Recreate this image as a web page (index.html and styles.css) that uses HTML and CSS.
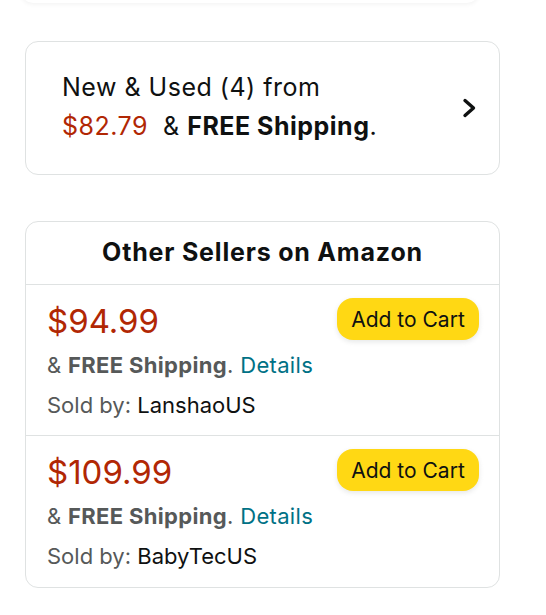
FILE: index.html
```html
<!DOCTYPE html>
<html>
<head>
<meta charset="utf-8">
<link rel="stylesheet" href="styles.css">
</head>
<body>
<div class="page">
  <div class="prev-card"></div>

  <a class="card offers">
    <div class="offers-text">
      <div>New &amp; Used (4) from</div>
      <div><span class="price-sm">$82.79</span>&nbsp; &amp; <b>FREE Shipping</b>.</div>
    </div>
    <svg class="chevron" width="16" height="22" viewBox="0 0 16 22"><path d="M4 3.5 L12.5 11 L4 18.5" fill="none" stroke="#0f1111" stroke-width="3.4" stroke-linecap="round" stroke-linejoin="round"/></svg>
  </a>

  <div class="card sellers">
    <div class="sellers-head">Other Sellers on Amazon</div>
    <div class="seller">
      <div class="seller-info">
        <div class="price">$94.99</div>
        <div class="ship">&amp; <b>FREE Shipping</b>. <span class="link">Details</span></div>
        <div class="sold">Sold by: <span class="name">LanshaoUS</span></div>
      </div>
      <button class="cart">Add to Cart</button>
    </div>
    <div class="seller">
      <div class="seller-info">
        <div class="price">$109.99</div>
        <div class="ship">&amp; <b>FREE Shipping</b>. <span class="link">Details</span></div>
        <div class="sold">Sold by: <span class="name">BabyTecUS</span></div>
      </div>
      <button class="cart">Add to Cart</button>
    </div>
  </div>
</div>
</body>
</html>
```
FILE: styles.css
```css
html, body {
  margin: 0;
  padding: 0;
  background: #fff;
}
body {
  font-family: "Inter", "Liberation Sans", sans-serif;
  color: #0f1111;
}
.page {
  width: 475px;
  padding-left: 25px;
  display: flex;
  flex-direction: column;
}
.prev-card {
  height: 20px;
  margin-top: -17px;
  margin-left: -4px;
  width: 458px;
  border-radius: 0 0 12px 12px;
  box-shadow: 0 1px 5px rgba(0,0,0,0.06);
  background: #fff;
}
.card {
  box-sizing: border-box;
  border: 1.5px solid #dfe2e2;
  border-radius: 13px;
  background: #fff;
}
.offers {
  margin-top: 38px;
  height: 134px;
  display: flex;
  align-items: center;
  justify-content: space-between;
  padding: 0 22px 0 36px;
  text-decoration: none;
  color: #0f1111;
}
.offers-text {
  font-size: 25px;
  letter-spacing: 0.5px;
  line-height: 39px;
  color: #0f1111;
  margin-top: -2px;
}
.offers-text b { font-weight: 700; }
.price-sm { color: #b12704; }
.chevron { display: block; }
.sellers {
  margin-top: 46px;
  height: 367px;
  display: flex;
  flex-direction: column;
}
.sellers-head {
  height: 63px;
  display: flex;
  align-items: center;
  justify-content: center;
  font-weight: 700;
  font-size: 25px;
  letter-spacing: 0.8px;
  border-bottom: 1.5px solid #dfe2e2;
  padding-bottom: 3px;
  box-sizing: border-box;
}
.seller {
  display: flex;
  justify-content: space-between;
  align-items: flex-start;
  padding: 12px 20px 0 21px;
  height: 150px;
  box-sizing: border-box;
}
.seller + .seller {
  border-top: 1.5px solid #dfe2e2;
}
.price {
  color: #b12704;
  font-size: 33px;
  line-height: 48px;
}
.ship, .sold {
  font-size: 22px;
  line-height: 40px;
  color: #565959;
}
.ship { letter-spacing: 0.33px; }
.ship b { font-weight: 700; }
.link { color: #007185; }
.name { color: #0f1111; }
.cart {
  margin-top: 1px;
  width: 142px;
  height: 42px;
  border: none;
  border-radius: 16px;
  background: #ffd814;
  color: #0f1111;
  font-family: inherit;
  font-size: 21px;
  padding: 0;
  box-shadow: 0 2px 5px rgba(213,217,217,0.6);
}
```
